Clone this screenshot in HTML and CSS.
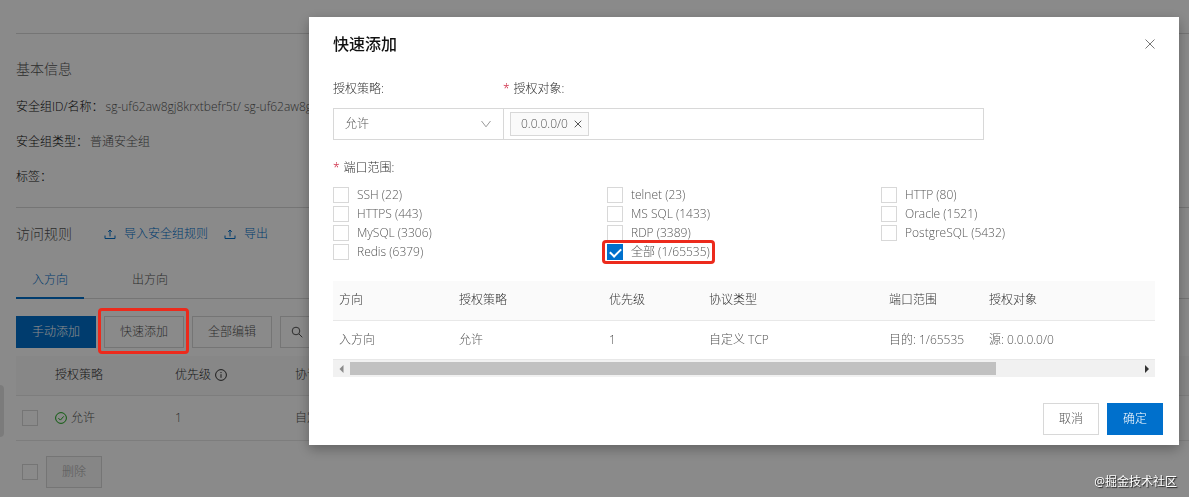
FILE: index.html
```html
<!DOCTYPE html>
<html lang="zh-CN">
<head>
    <meta charset="UTF-8">
    <meta name="viewport" content="width=device-width, initial-scale=1.0">
    <title>安全组规则</title>
    <link rel="stylesheet" href="styles.css">
</head>
<body>
    <main class="page">
        <section class="info">
            <h2>基本信息</h2>
            <dl>
                <div><dt>安全组ID/名称：</dt><dd>sg-uf62aw8gj8krxtbefr5t/ sg-uf62aw8gj8krxtbefr5t</dd></div>
                <div><dt>安全组类型：</dt><dd>普通安全组</dd></div>
                <div><dt>标签：</dt><dd></dd></div>
            </dl>
        </section>

        <section class="rules">
            <div class="rules-head">
                <h2>访问规则</h2>
                <a href="#import">
                    <svg width="12" height="12" viewBox="0 0 12 12"><path d="M1 7.5v3h10v-3M6 8.5V2M4.2 3.8L6 2l1.8 1.8"/></svg>
                    导入安全组规则
                </a>
                <a href="#export">
                    <svg width="12" height="12" viewBox="0 0 12 12"><path d="M1 7.5v3h10v-3M6 8.5V2M4.2 3.8L6 2l1.8 1.8"/></svg>
                    导出
                </a>
            </div>

            <nav class="tabs">
                <a href="#in" class="active">入方向</a>
                <a href="#out">出方向</a>
            </nav>

            <div class="toolbar">
                <button type="button" class="btn primary">手动添加</button>
                <span class="marked"><button type="button" class="btn">快速添加</button></span>
                <button type="button" class="btn">全部编辑</button>
                <div class="search">
                    <svg width="12" height="12" viewBox="0 0 12 12"><circle cx="5" cy="5" r="3.8"/><path d="M7.8 7.8L11.3 11.3"/></svg>
                    <input type="text" aria-label="搜索">
                </div>
            </div>

            <table class="rule-table">
                <thead>
                    <tr>
                        <th class="col-check"></th>
                        <th class="col">授权策略</th>
                        <th class="col">
                            <span class="with-icon">优先级
                                <svg width="12" height="12" viewBox="0 0 12 12"><circle cx="6" cy="6" r="5.4"/><path d="M6 5.2v3.6M6 3v1.1"/></svg>
                            </span>
                        </th>
                        <th>协议类型</th>
                    </tr>
                </thead>
                <tbody>
                    <tr>
                        <td><input type="checkbox" class="check" aria-label="选择规则"></td>
                        <td>
                            <span class="with-icon ok">
                                <svg width="12" height="12" viewBox="0 0 12 12"><circle cx="6" cy="6" r="5.4"/><path d="M3.4 6.1l2 2L8.7 4.4"/></svg>
                                允许</span>
                        </td>
                        <td>1</td>
                        <td>自定义 TCP</td>
                    </tr>
                </tbody>
            </table>

            <div class="batch">
                <input type="checkbox" class="check" aria-label="全选">
                <button type="button" class="btn small" disabled>删除</button>
            </div>
        </section>
    </main>
    <button type="button" class="side-handle" aria-label="展开菜单"></button>

    <div class="mask">
        <div class="modal" role="dialog" aria-labelledby="modal-title">
            <header>
                <h1 id="modal-title">快速添加</h1>
                <button type="button" class="close" aria-label="关闭">
                    <svg width="10" height="10" viewBox="0 0 10 10"><path d="M.5.5l9 9M9.5.5l-9 9"/></svg>
                </button>
            </header>

            <form>
                <div class="fields">
                    <div class="policy">
                        <label for="policy">授权策略:</label>
                        <div class="select-box">
                            <select id="policy">
                                <option>允许</option>
                                <option>拒绝</option>
                            </select>
                            <svg width="10" height="8" viewBox="0 0 10 8"><path d="M.5 1L5 6.8 9.5 1"/></svg>
                        </div>
                    </div>
                    <div class="target">
                        <label for="target" class="required">授权对象:</label>
                        <div class="tag-box">
                            <span class="tag">0.0.0.0/0
                                <button type="button" aria-label="移除">
                                    <svg width="8" height="8" viewBox="0 0 8 8"><path d="M.7.7l6.6 6.6M7.3.7L.7 7.3"/></svg>
                                </button>
                            </span>
                            <input type="text" id="target">
                        </div>
                    </div>
                </div>

                <fieldset class="ports">
                    <legend class="required">端口范围:</legend>
                    <div class="port-grid">
                        <label><input type="checkbox" class="check">SSH (22)</label>
                        <label><input type="checkbox" class="check">telnet (23)</label>
                        <label><input type="checkbox" class="check">HTTP (80)</label>
                        <label><input type="checkbox" class="check">HTTPS (443)</label>
                        <label><input type="checkbox" class="check">MS SQL (1433)</label>
                        <label><input type="checkbox" class="check">Oracle (1521)</label>
                        <label><input type="checkbox" class="check">MySQL (3306)</label>
                        <label><input type="checkbox" class="check">RDP (3389)</label>
                        <label><input type="checkbox" class="check">PostgreSQL (5432)</label>
                        <label><input type="checkbox" class="check">Redis (6379)</label>
                        <label class="marked"><input type="checkbox" class="check" checked>全部 (1/65535)</label>
                    </div>
                </fieldset>
            </form>

            <div class="preview">
                <table>
                    <colgroup>
                        <col class="w120"><col class="w150"><col class="w100"><col class="w180"><col class="w100"><col>
                    </colgroup>
                    <thead>
                        <tr><th>方向</th><th>授权策略</th><th>优先级</th><th>协议类型</th><th>端口范围</th><th>授权对象</th></tr>
                    </thead>
                    <tbody>
                        <tr><td>入方向</td><td>允许</td><td>1</td><td>自定义 TCP</td><td>目的: 1/65535</td><td>源: 0.0.0.0/0</td></tr>
                    </tbody>
                </table>
            </div>
            <div class="scrollbar">
                <svg class="at-end" width="17" height="17" viewBox="0 0 17 17"><path d="M10.5 5v8L6.5 9z"/></svg>
                <div class="track"><div class="thumb"></div></div>
                <svg width="17" height="17" viewBox="0 0 17 17"><path d="M7 5v8l4-4z"/></svg>
            </div>

            <footer>
                <button type="button" class="btn small">取消</button>
                <button type="button" class="btn small primary">确定</button>
            </footer>
        </div>
    </div>
    <div class="watermark">@掘金技术社区</div>
</body>
</html>
```
FILE: styles.css
```css
* {
    margin: 0;
    padding: 0;
    box-sizing: border-box;
}

body {
    min-height: 100vh;
    overflow: hidden;
    background: #fff;
    color: #555;
    font-family: "Open Sans", "Noto Sans CJK SC", sans-serif;
    font-size: 12px;
    font-weight: 300;
    line-height: 18px;
}

button,
input,
select {
    font: inherit;
    color: inherit;
}

button {
    cursor: pointer;
}

a {
    color: #0070cc;
    text-decoration: none;
}

svg {
    flex: none;
    fill: none;
    stroke: currentColor;
}

table {
    width: 100%;
    border-collapse: collapse;
    table-layout: fixed;
}

th,
td {
    padding: 0 6px;
    text-align: left;
    font-weight: inherit;
    white-space: nowrap;
    border-bottom: 1px solid #e8e8e8;
}

th {
    color: #333;
    background: #fafafa;
}

.btn {
    display: block;
    width: 80px;
    height: 32px;
    border: 1px solid #d8d8d8;
    background: #fff;
    color: #555;
}

.btn.small {
    width: 56px;
}

.btn.primary {
    border-color: #0070cc;
    background: #0070cc;
    color: #fff;
}

.btn:disabled {
    background: #f7f7f7;
    color: #aaa;
}

.check {
    display: block;
    flex: none;
    appearance: none;
    width: 16px;
    height: 16px;
    border: 1px solid #d8d8d8;
    background: #fff;
}

.check:checked {
    display: flex;
    justify-content: center;
    border-color: #0070cc;
    background: #0070cc;
}

.check:checked::before {
    content: "";
    width: 5px;
    height: 9px;
    margin-top: 1px;
    border: solid #fff;
    border-width: 0 2px 2px 0;
    transform: rotate(45deg);
}

/* red highlight frame, drawn above the mask */
.marked {
    position: relative;
}

.marked::after {
    content: "";
    position: absolute;
    inset: -8px -5px -6px -6px;
    z-index: 20;
    border: 3px solid #ec2a1c;
    border-radius: 4px;
    pointer-events: none;
}

/* page */
.page {
    padding: 33px 0 0 16px;
}

.page h2 {
    font-size: 14px;
    font-weight: inherit;
    line-height: 20px;
    color: #555;
}

.info {
    padding: 25px 0 21px;
    border-top: 1px solid #d8d8d8;
}

.info dl {
    display: grid;
    gap: 17px;
    padding-top: 19px;
}

.info dl div {
    display: flex;
    min-height: 18px;
    white-space: nowrap;
}

.info dt {
    color: #111;
}

.info dd {
    padding-left: 2px;
}

.rules {
    border-top: 1px solid #d8d8d8;
}

.rules-head {
    display: flex;
    align-items: center;
    gap: 16px;
    padding: 16px 0 18px;
}

.rules-head h2 {
    margin-right: 16px;
}

.rules-head a {
    display: flex;
    align-items: center;
    gap: 8px;
}

.tabs {
    display: flex;
    gap: 32px;
    border-bottom: 1px solid #d8d8d8;
}

.tabs a {
    padding: 9px 16px 8px;
    margin-bottom: -1px;
    border-bottom: 2px solid transparent;
    color: #555;
}

.tabs .active {
    border-color: #0070cc;
    color: #0070cc;
}

.toolbar {
    display: flex;
    gap: 8px;
    padding: 17px 0 8px;
}

.search {
    display: flex;
    align-items: center;
    width: 240px;
    height: 32px;
    padding: 0 10px;
    border: 1px solid #d8d8d8;
}

.search input {
    flex: 1;
    min-width: 0;
    padding-left: 8px;
    border: 0;
    outline: none;
}

.rule-table th {
    height: 39px;
}

.rule-table td {
    height: 45px;
}

.rule-table .col-check {
    width: 33px;
}

.rule-table .col {
    width: 120px;
}

.with-icon {
    display: flex;
    align-items: center;
    gap: 4px;
}

.with-icon.ok svg {
    color: #1aa81a;
}

.batch {
    display: flex;
    align-items: center;
    gap: 8px;
    padding: 15px 6px;
}

.side-handle {
    position: fixed;
    top: 385px;
    left: 0;
    width: 4px;
    height: 52px;
    border: 0;
    border-radius: 0 4px 4px 0;
    background: #e4e4e4;
}

/* modal */
.mask {
    position: fixed;
    inset: 0;
    z-index: 10;
    display: flex;
    justify-content: flex-end;
    align-items: flex-start;
    padding: 17px 10px;
    background: rgba(0, 0, 0, 0.46);
}

.modal {
    width: 100%;
    max-width: 870px;
    padding: 15px 24px 10px;
    background: #fff;
    box-shadow: 0 4px 12px rgba(0, 0, 0, 0.3);
}

.modal header {
    display: flex;
    justify-content: space-between;
    align-items: center;
}

.modal h1 {
    font-size: 16px;
    font-weight: 500;
    line-height: 24px;
    color: #111;
}

.close {
    display: flex;
    justify-content: center;
    align-items: center;
    width: 10px;
    height: 24px;
    border: 0;
    background: none;
    color: #777;
}

.fields {
    display: flex;
    padding-top: 24px;
}

.fields label {
    display: block;
    padding-bottom: 10px;
    color: #333;
}

.required::before {
    content: "*";
    margin-right: 4px;
    color: #c8102e;
}

.policy {
    width: 170px;
}

.target {
    width: 481px;
}

.select-box {
    display: grid;
    align-items: center;
}

.select-box > * {
    grid-area: 1 / 1;
}

.select-box select {
    appearance: none;
    width: 100%;
    height: 32px;
    padding: 0 11px;
    border: 1px solid #d8d8d8;
    border-right: 0;
    background: #fff;
    outline: none;
}

.select-box svg {
    justify-self: end;
    margin-right: 12px;
    color: #999;
    pointer-events: none;
}

.tag-box {
    display: flex;
    align-items: center;
    height: 32px;
    padding: 0 6px;
    border: 1px solid #d8d8d8;
}

.tag {
    display: flex;
    align-items: center;
    gap: 6px;
    height: 24px;
    padding: 0 6px 0 10px;
    border: 1px solid #d8d8d8;
    background: #fafafa;
}

.tag button {
    display: flex;
    border: 0;
    background: none;
}

.tag-box input {
    flex: 1;
    min-width: 0;
    padding: 0 8px;
    border: 0;
    outline: none;
}

.ports {
    border: 0;
    padding-top: 19px;
}

.ports legend {
    float: left;
    width: 100%;
    padding-bottom: 8px;
    color: #333;
}

.port-grid {
    clear: both;
    display: grid;
    grid-template-columns: repeat(3, 1fr);
    justify-items: start;
}

.port-grid label {
    display: flex;
    align-items: center;
    gap: 8px;
    height: 19px;
}

.port-grid .marked::after {
    inset: -2px -5px -3px;
}

.preview {
    margin-top: 20px;
    overflow: hidden;
}

.preview table {
    min-width: 1000px;
}

.preview th,
.preview td {
    height: 39px;
}

.w100 {
    width: 100px;
}

.w120 {
    width: 120px;
}

.w150 {
    width: 150px;
}

.w180 {
    width: 180px;
}

.scrollbar {
    display: flex;
    height: 17px;
    background: #f1f1f1;
}

.scrollbar svg {
    fill: #333;
    stroke: none;
}

.scrollbar .at-end {
    fill: #8a8a8a;
}

.track {
    flex: 1;
    padding: 2px 0;
}

.thumb {
    width: 82%;
    height: 100%;
    background: #c1c1c1;
}

.modal footer {
    display: flex;
    justify-content: flex-end;
    gap: 8px;
    margin-right: -8px;
    padding-top: 26px;
}

.watermark {
    position: fixed;
    right: 12px;
    bottom: 6px;
    z-index: 30;
    color: #fff;
    font-weight: 400;
    text-shadow: 1px 1px 1px #222;
}
```
